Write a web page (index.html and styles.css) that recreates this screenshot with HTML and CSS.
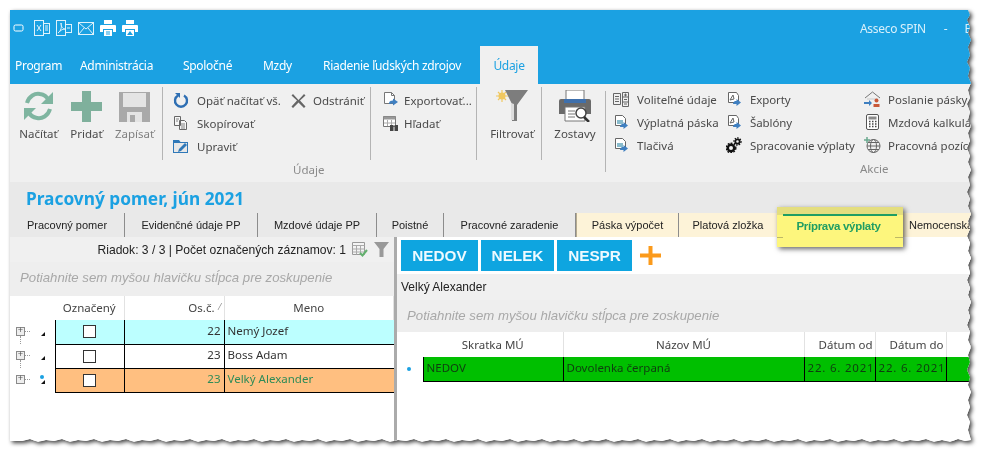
FILE: index.html
```html
<!DOCTYPE html>
<html lang="sk">

<head>
  <meta charset="UTF-8" />
  <title>Pracovný pomer</title>
  <link rel="stylesheet" href="styles.css">
</head>

<body>
  <div class="shot">
    <div class="window">

      <!-- Title bar -->
      <div class="titlebar">
        <div class="quick">
          <svg width="11" height="8" viewBox="0 0 11 8"><rect x="1" y="1" width="9" height="6" rx="1.5" fill="none" stroke="#fff"/><path d="M3 5.5h5" stroke="#1ba1e2"/></svg>
          <svg width="16" height="16" viewBox="0 0 16 16" fill="none" stroke="#dff2fb"><rect x=".5" y=".5" width="9" height="15"/><rect x="9.5" y="3.5" width="6" height="10"/><path d="M3 5l4 6M7 5l-4 6M11 6h3M11 8h3M11 10h3"/></svg>
          <svg width="16" height="16" viewBox="0 0 16 16" fill="none" stroke="#dff2fb"><rect x=".5" y=".5" width="9" height="15"/><rect x="9.5" y="4.5" width="6" height="8"/><path d="M2 13c3-2 4-6 3-10 0 4 2 6 4 6-3 0-5 2-7 4zM11 8h3"/></svg>
          <svg width="16" height="13" viewBox="0 0 16 13" fill="none" stroke="#dff2fb"><rect x=".5" y=".5" width="15" height="12"/><path d="M1 1l7 6 7-6M1 12l5-6M15 12l-5-6"/></svg>
          <svg width="16" height="16" viewBox="0 0 16 16"><path d="M4 0h8v4H4zM1 5h14a1 1 0 0 1 1 1v6h-3V9H3v3H0V6a1 1 0 0 1 1-1zM4 10h8v6H4z" fill="#fff"/><path d="M6 12h4M6 14h4" stroke="#1ba1e2"/></svg>
          <svg width="16" height="16" viewBox="0 0 16 16"><path d="M4 0h8v4H4zM1 5h14a1 1 0 0 1 1 1v6h-3V9H3v3H0V6a1 1 0 0 1 1-1zM4 10h8v6H4z" fill="#fff"/><path d="M8 11l3 4H5z" fill="#1ba1e2"/></svg>
        </div>
        <div class="user">
          <span>Asseco SPIN</span>
          <span class="user-dash">-</span>
          <span>B</span>
        </div>
      </div>

      <!-- Menu -->
      <nav class="menu">
        <a class="m-program">Program</a>
        <a class="m-admin">Administrácia</a>
        <a class="m-spol">Spoločné</a>
        <a class="m-mzdy">Mzdy</a>
        <a class="m-riad">Riadenie ľudských zdrojov</a>
        <a class="m-udaje">Údaje</a>
      </nav>

      <!-- Ribbon -->
      <div class="ribbon">
        <div class="group g-main">
          <div class="big b-nacitat">
            <svg width="31" height="32" viewBox="0 0 31 32" fill="none"><path d="M4 13C6 6 12 3 17 4c4 .6 7 3 8.500 6" stroke="#7fb5a0" stroke-width="4"/><path d="M30 2v12H18z" fill="#7fb5a0"/><path d="M27 19c-2 7-8 10-13 9-4-.6-7-3-8.500-6" stroke="#7fb5a0" stroke-width="4"/><path d="M1 30V18h12z" fill="#7fb5a0"/></svg>
            <span>Načítať</span>
          </div>
          <div class="big b-pridat">
            <svg width="31" height="32" viewBox="0 0 31 32"><path d="M11 1h9v11h11v9H20v11h-9V21H0v-9h11z" fill="#7fb09c"/></svg>
            <span>Pridať</span>
          </div>
          <div class="big b-zapisat">
            <svg width="31" height="32" viewBox="0 0 31 32"><path d="M0 2h31v30H0z" fill="#a9a9a9"/><path d="M4 3h23v14H4z" fill="#e4e4e4"/><path d="M8 22h15v10H8z" fill="#e4e4e4"/><path d="M11 25h5v7h-5z" fill="#a9a9a9"/></svg>
            <span class="muted">Zapísať</span>
          </div>
        </div>

        <div class="group g-udaje">
          <div class="cols">
            <div class="col c-a">
              <div class="item">
                <svg width="16" height="16" viewBox="0 0 16 16" fill="none"><path d="M5 3.500a6 6 0 1 0 6 0" stroke="#2f6fb3" stroke-width="2.400"/><path d="M2 1l5 0 0 5z" fill="#2f6fb3"/></svg>
                <span>Opäť načítať vš.</span>
              </div>
              <div class="item">
                <svg width="16" height="16" viewBox="0 0 16 16" fill="#f6f6f6" stroke="#666"><path d="M1.500 1.500h6v9h-6zM6.500 5.500h5l2 2v7h-7z"/><path d="M3 4h3M3 6h2M8 9h4M8 11h4M8 13h4" stroke-width=".8"/></svg>
                <span>Skopírovať</span>
              </div>
              <div class="item">
                <svg width="16" height="16" viewBox="0 0 16 16"><path d="M0 2h6l1.500 2H15v11H0z" fill="#2f78b8"/><path d="M1 5h13v9H1z" fill="#e8e8e8"/><path d="M5 14l1-3 6-6 2 2-6 6z" fill="#2f78b8"/></svg>
                <span>Upraviť</span>
              </div>
            </div>
            <div class="col c-b">
              <div class="item">
                <svg width="15" height="15" viewBox="0 0 15 15"><path d="M2 1l5.500 6L13 1l1.500 1.500L9 7.500l5.500 6L13 15 7.500 9.500 2 15 .5 13.500 6 7.500.5 2.500z" fill="#666"/></svg>
                <span>Odstrániť</span>
              </div>
            </div>
          </div>
          <div class="group-name n-udaje">Údaje</div>
        </div>

        <div class="group g-export">
          <div class="col">
            <div class="item">
              <svg width="16" height="16" viewBox="0 0 16 16"><path d="M1.500.5h7l3 3v8h-10z" fill="#fff" stroke="#777"/><path d="M8.500.5v3h3" fill="none" stroke="#777"/><path d="M6 12c0-3 2-3.500 4-3.500V6.500l5 3.500-5 3.500v-2c-2 0-3 .2-4 .5z" fill="#3f7fc0"/></svg>
              <span>Exportovať...</span>
            </div>
            <div class="item">
              <svg width="16" height="16" viewBox="0 0 16 16"><path d="M.5 1.500h12v10H.5z" fill="#fff" stroke="#777"/><path d="M.5 1.500h12v3H.5z" fill="#999"/><path d="M4.500 5v6M8.500 5v6M1 8h11" stroke="#aaa"/><rect x="7" y="10" width="3.500" height="6" fill="#444"/><rect x="11.500" y="10" width="3.500" height="6" fill="#444"/></svg>
              <span>Hľadať</span>
            </div>
          </div>
        </div>

        <div class="group g-filter">
          <div class="big">
            <svg width="32" height="32" viewBox="0 0 32 32"><path d="M9 0h23L21 15v16h-5V14z" fill="#7d7d7d"/><path d="M15 13v17h3V14z" fill="#ddd"/><circle cx="6" cy="6" r="3.500" fill="#f0c860"/><path d="M6 0v12M0 6h12M2 2l8 8M10 2l-8 8" stroke="#f0c860" stroke-width="1.200"/></svg>
            <span>Filtrovať</span>
          </div>
        </div>

        <div class="group g-reports">
          <div class="big">
            <svg width="32" height="32" viewBox="0 0 32 32"><path d="M7 0h18v10H7z" fill="#fff" stroke="#777"/><path d="M0 11a2 2 0 0 1 2-2h28a2 2 0 0 1 2 2v13H0z" fill="#6a6a6a"/><path d="M5 9h22v4H5z" fill="#3f70ac"/><path d="M6 17h20v14H6z" fill="#fff" stroke="#777"/><path d="M9 21h7M9 24h7M9 27h7" stroke="#777"/><circle cx="22" cy="23" r="5" fill="#fff" stroke="#444" stroke-width="1.500"/><path d="M25 27l5 5" stroke="#333" stroke-width="2.500"/></svg>
            <span>Zostavy</span>
          </div>
        </div>

        <div class="group g-akcie">
          <div class="cols">
            <div class="col c-d">
              <div class="item">
                <svg width="16" height="16" viewBox="0 0 16 16" fill="none" stroke="#666"><path d="M.5 2.500h7v11h-7zM9.500 1.500h6v14h-6zM2 5.500h4M2 8h4M2 10.500h4M9.500 6h6M9.500 11h6M11 4h3M12.500 2.500v3M11 8.500h3M11 13h3"/></svg>
                <span>Voliteľné údaje</span>
              </div>
              <div class="item">
                <svg width="16" height="16" viewBox="0 0 16 16"><path d="M2.500 1.500h7l3 3v7h-10z" fill="#fff" stroke="#666"/><path d="M4 6h6v4H4z" fill="#8bc"/><path d="M7 13c0-2.500 2-3 3.500-3V8l4.500 3.500L10.500 15v-2c-1.500 0-2.500.2-3.500 0z" fill="#3f7fc0"/></svg>
                <span>Výplatná páska</span>
              </div>
              <div class="item">
                <svg width="16" height="16" viewBox="0 0 16 16"><path d="M2.500 1.500h7l3 3v7h-10z" fill="#fff" stroke="#666"/><path d="M4 6h6v4H4z" fill="#8bc"/><path d="M7 13c0-2.500 2-3 3.500-3V8l4.500 3.500L10.500 15v-2c-1.500 0-2.500.2-3.500 0z" fill="#3f7fc0"/></svg>
                <span>Tlačivá</span>
              </div>
            </div>
            <div class="col c-e">
              <div class="item">
                <svg width="16" height="16" viewBox="0 0 16 16"><path d="M2.500 1.500h8l2 3v7h-10z" fill="#fff" stroke="#666"/><path d="M4 9l3-5 1 4z" fill="none" stroke="#666"/><path d="M7 13c0-2.500 2-3 3.500-3V8l4.500 3.500L10.500 15v-2c-1.500 0-2.500.2-3.500 0z" fill="#3f7fc0"/></svg>
                <span>Exporty</span>
              </div>
              <div class="item">
                <svg width="16" height="16" viewBox="0 0 16 16"><path d="M2.500 1.500h8l2 3v7h-10z" fill="#fff" stroke="#666"/><path d="M4 9l3-5 1 4z" fill="none" stroke="#666"/><path d="M7 13c0-2.500 2-3 3.500-3V8l4.500 3.500L10.500 15v-2c-1.500 0-2.500.2-3.500 0z" fill="#3f7fc0"/></svg>
                <span>Šablóny</span>
              </div>
              <div class="item">
                <svg width="16" height="16" viewBox="0 0 16 16"><circle cx="5" cy="11" r="3.200" fill="none" stroke="#111" stroke-width="2.400"/><circle cx="5" cy="11" r="4.800" fill="none" stroke="#111" stroke-width="1.400" stroke-dasharray="1.800 1.300"/><circle cx="11.500" cy="4.500" r="2.200" fill="none" stroke="#111" stroke-width="1.800"/><circle cx="11.500" cy="4.500" r="3.600" fill="none" stroke="#111" stroke-width="1.200" stroke-dasharray="1.500 1.200"/></svg>
                <span>Spracovanie výplaty</span>
              </div>
            </div>
            <div class="col c-f">
              <div class="item">
                <svg width="17" height="16" viewBox="0 0 17 16"><path d="M1 7l7.500-6L16 7" fill="none" stroke="#777"/><path d="M3 7h11v2H3z" fill="#ddd"/><path d="M0 11h5V9l3 3-3 3v-2H0z" fill="#3f7fc0"/><circle cx="12.500" cy="9.500" r="2" fill="#c9593a"/><path d="M9.500 16v-3h6v3z" fill="#c9593a"/></svg>
                <span>Poslanie pásky</span>
              </div>
              <div class="item">
                <svg width="17" height="16" viewBox="0 0 17 16"><rect x="2.500" y=".5" width="12" height="15" rx="1.500" fill="#fff" stroke="#555"/><path d="M4.500 2.500h8v3h-8z" fill="#8a8a8a"/><path d="M5 7.500h1.500M8 7.500h1.500M11 7.500h1.500M5 10h1.500M8 10h1.500M11 10h1.500M5 12.500h1.500M8 12.500h1.500M11 12.500h1.500" stroke="#444" stroke-width="1.500"/></svg>
                <span>Mzdová kalkulácia</span>
              </div>
              <div class="item">
                <svg width="17" height="16" viewBox="0 0 17 16" fill="none" stroke="#666"><circle cx="9.500" cy="9" r="6.500"/><ellipse cx="9.500" cy="9" rx="3" ry="6.500"/><path d="M3 9h13M4 5.500h11M4 12.500h11"/><path d="M3 0v6M0 3h6" stroke="#6aa88e" stroke-width="1.500"/></svg>
                <span>Pracovná pozícia</span>
              </div>
            </div>
          </div>
          <div class="group-name n-akcie">Akcie</div>
        </div>
      </div>

      <!-- Page heading and tabs -->
      <div class="page-head">
        <h1>Pracovný pomer, jún 2021</h1>
        <div class="tabs">
          <div class="tab w1">Pracovný pomer</div>
          <div class="tab w2">Evidenčné údaje PP</div>
          <div class="tab w3">Mzdové údaje PP</div>
          <div class="tab w4">Poistné</div>
          <div class="tab w5">Pracovné zaradenie</div>
          <div class="tab cream w6">Páska výpočet</div>
          <div class="tab cream w7">Platová zložka</div>
          <div class="tab-active">
            <div class="tab-active-line"></div>
            <div class="tab-active-text">Príprava výplaty</div>
          </div>
          <div class="tab cream w9">Nemocenská</div>
        </div>
      </div>

      <!-- Two panes -->
      <div class="panes">
        <section class="left">
          <div class="status">
            <span>Riadok: 3 / 3 | Počet označených záznamov: 1</span>
            <svg width="16" height="15" viewBox="0 0 16 15"><path d="M.5.5h12v12H.5z" fill="#f4f4f4" stroke="#999"/><path d="M.5 3.500h12M4.500 3.500v9M8.500 3.500v9M.5 7h12M.5 10h12" stroke="#aaa"/><path d="M8 11l2.500 2.500L15 8" fill="none" stroke="#63b06e" stroke-width="2"/></svg>
            <svg width="15" height="15" viewBox="0 0 15 15"><path d="M0 0h15L9.500 7v8h-4V7z" fill="#999"/></svg>
          </div>
          <div class="hint hint-left">Potiahnite sem myšou hlavičku stĺpca pre zoskupenie</div>
          <table class="grid grid-left">
            <thead>
              <tr>
                <th class="gut"></th>
                <th class="c-check">Označený</th>
                <th class="c-num">Os.č.<span class="sort">⁄</span></th>
                <th>Meno</th>
              </tr>
            </thead>
            <tbody>
              <tr class="r-cyan">
                <td class="gut"><span class="expander tree-down">+</span><span class="mark"></span></td>
                <td class="c-check"><span class="box"></span></td>
                <td class="c-num">22</td>
                <td>Nemý Jozef</td>
              </tr>
              <tr class="r-white">
                <td class="gut"><span class="expander tree-down">+</span><span class="mark"></span></td>
                <td class="c-check"><span class="box"></span></td>
                <td class="c-num">23</td>
                <td>Boss Adam</td>
              </tr>
              <tr class="r-orange">
                <td class="gut"><span class="expander">+</span><span class="mark"></span><span class="dot"></span></td>
                <td class="c-check"><span class="box"></span></td>
                <td class="c-num">23</td>
                <td>Velký Alexander</td>
              </tr>
            </tbody>
          </table>
        </section>

        <section class="right">
          <div class="buttons">
            <div class="btn b1">NEDOV</div>
            <div class="btn b2">NELEK</div>
            <div class="btn b3">NESPR</div>
            <svg class="plus" width="21" height="19" viewBox="0 0 21 19"><path d="M8.500 0h4v7.500H21v4h-8.500V19h-4v-7.500H0v-4h8.500z" fill="#fb9a1b"/></svg>
          </div>
          <div class="person">Velký Alexander</div>
          <div class="hint hint-right">Potiahnite sem myšou hlavičku stĺpca pre zoskupenie</div>
          <table class="grid grid-right">
            <thead>
              <tr>
                <th class="gut2"></th>
                <th class="c-code">Skratka MÚ</th>
                <th class="c-name">Názov MÚ</th>
                <th class="c-date">Dátum od</th>
                <th class="c-date">Dátum do</th>
                <th></th>
              </tr>
            </thead>
            <tbody>
              <tr class="r-green">
                <td class="gut2"><span class="dot2"></span></td>
                <td>NEDOV</td>
                <td>Dovolenka čerpaná</td>
                <td class="c-date">22. 6. 2021</td>
                <td class="c-date">22. 6. 2021</td>
                <td></td>
              </tr>
            </tbody>
          </table>
        </section>
      </div>

    </div>
  </div>
</body>

</html>
```

FILE: styles.css
```css
/* Page and torn screenshot edge */
body {
  margin: 0;
  background: #fff;
  font-family: "Noto Sans", sans-serif;
  font-size: 11.5px;
  color: #4a4a4a;
  overflow: hidden;
}

.shot {
  padding: 10px 0 0 10px;
  width: 978px;
  height: 451px;
  filter: drop-shadow(2px 2px 2px rgba(0, 0, 0, 0.75));
}

.window {
  width: 964px;
  height: 436px;
  background: #fff;
  overflow: hidden;
  clip-path: polygon(0 0, 958px 0, 960px 5px, 957px 10px, 960px 17px, 958px 23px, 961px 30px, 958px 37px, 960px 45px, 957px 52px, 960px 58px, 958px 66px, 961px 73px, 958px 80px, 960px 88px, 957px 94px, 960px 102px, 958px 110px, 961px 116px, 958px 123px, 960px 131px, 957px 138px, 960px 146px, 958px 152px, 961px 160px, 958px 167px, 960px 175px, 957px 182px, 960px 189px, 958px 196px, 961px 204px, 958px 211px, 960px 219px, 957px 226px, 960px 233px, 958px 241px, 961px 248px, 958px 255px, 960px 263px, 957px 270px, 960px 278px, 958px 285px, 961px 292px, 958px 300px, 960px 307px, 957px 315px, 960px 322px, 958px 330px, 961px 337px, 958px 345px, 960px 352px, 957px 360px, 960px 367px, 958px 375px, 961px 382px, 958px 390px, 960px 397px, 957px 405px, 960px 412px, 958px 420px, 961px 430px, 955px 431px, 948px 429px, 940px 432px, 932px 430px, 924px 432px, 916px 429px, 908px 431px, 900px 430px, 892px 432px, 884px 429px, 876px 431px, 868px 430px, 860px 432px, 852px 429px, 844px 431px, 836px 430px, 828px 432px, 820px 429px, 812px 431px, 804px 430px, 796px 432px, 788px 429px, 780px 431px, 772px 430px, 764px 432px, 756px 429px, 748px 431px, 740px 430px, 732px 432px, 724px 429px, 716px 431px, 708px 430px, 700px 432px, 692px 429px, 684px 431px, 676px 430px, 668px 432px, 660px 429px, 652px 431px, 644px 430px, 636px 432px, 628px 429px, 620px 431px, 612px 430px, 604px 432px, 596px 429px, 588px 431px, 580px 430px, 572px 432px, 564px 429px, 556px 431px, 548px 430px, 540px 432px, 532px 429px, 524px 431px, 516px 430px, 508px 432px, 500px 429px, 492px 431px, 484px 430px, 476px 432px, 468px 429px, 460px 431px, 452px 430px, 444px 432px, 436px 429px, 428px 431px, 420px 430px, 412px 432px, 404px 429px, 396px 431px, 388px 430px, 380px 432px, 372px 429px, 364px 431px, 356px 430px, 348px 432px, 340px 429px, 332px 431px, 324px 430px, 316px 432px, 308px 429px, 300px 431px, 292px 430px, 284px 432px, 276px 429px, 268px 431px, 260px 430px, 252px 432px, 244px 429px, 236px 431px, 228px 430px, 220px 432px, 212px 429px, 204px 431px, 196px 430px, 188px 432px, 180px 429px, 172px 431px, 164px 430px, 156px 432px, 148px 429px, 140px 431px, 132px 430px, 124px 432px, 116px 429px, 108px 431px, 100px 430px, 92px 432px, 84px 429px, 76px 431px, 68px 430px, 60px 432px, 52px 429px, 44px 431px, 36px 430px, 28px 432px, 20px 429px, 12px 431px, 0 431px);
}

/* Title bar */
.titlebar {
  height: 36px;
  background: #1ba1e2;
  display: flex;
  align-items: center;
  color: #d8f0fb;
  font-size: 12px;
  letter-spacing: -0.3px;
}

.quick {
  display: flex;
  align-items: center;
  gap: 6px;
  padding-left: 3px;
}

.quick svg:first-child {
  margin-right: 4px;
}

.user {
  margin-left: auto;
  display: flex;
  width: 114px;
  white-space: nowrap;
}

.user-dash {
  margin: 0 17px 0 18px;
}

/* Menu */
.menu {
  height: 38px;
  background: #1ba1e2;
  display: flex;
  color: #fff;
  font-size: 12px;
  letter-spacing: -0.3px;
}

.menu a {
  line-height: 40px;
  white-space: nowrap;
}

.m-program { margin-left: 5px; width: 65px; }
.m-admin { width: 103px; }
.m-spol { width: 80px; }
.m-mzdy { width: 60px; }
.m-riad { width: 157px; }

.m-udaje {
  width: 58px;
  text-align: center;
  background: #f0f0f0;
  color: #1ba1e2;
}

/* Ribbon */
.ribbon {
  height: 98px;
  background: #f0f0f0;
  display: flex;
}

.group {
  box-sizing: border-box;
  padding-top: 3px;
  height: 73px;
  margin-top: 3px;
  border-right: 1px solid #b4b4b4;
  flex: none;
}

.g-main { width: 153px; display: flex; }
.g-udaje { width: 208px; }
.g-export { width: 106px; padding-left: 12px; }
.g-filter { width: 65px; }
.g-reports { width: 63px; border-right: 0; }

.g-akcie {
  flex: 1;
  height: 81px;
  margin-top: 7px;
  padding: 0 0 0 7px;
  border-right: 0;
  border-left: 1px solid #b4b4b4;
}

.big {
  display: flex;
  flex-direction: column;
  align-items: center;
  gap: 4px;
  white-space: nowrap;
}

.big svg {
  display: block;
}

.big span {
  line-height: 16px;
}

.b-nacitat { margin-left: 13px; width: 31px; }
.b-pridat { margin-left: 17px; width: 31px; }
.b-zapisat { margin-left: 17px; width: 31px; }
.g-filter .big { margin-left: 3px; width: 64px; }
.g-reports .big { margin-left: 1px; width: 64px; }

.muted {
  color: #808080;
}

.cols {
  display: flex;
}

.col {
  display: flex;
  flex-direction: column;
  gap: 7px;
  padding-top: 2px;
}

.item {
  display: flex;
  align-items: center;
  gap: 8px;
  height: 16px;
  white-space: nowrap;
}

.item svg {
  flex: none;
}

.g-export .item { gap: 5px; }

.c-a { width: 113px; padding-left: 10px; }
.c-b { padding-left: 5px; }
.c-b .item { gap: 7px; }
.c-d { width: 113px; }
.c-e { width: 138px; }
.c-f .item { gap: 7px; }
.c-e span { letter-spacing: -0.1px; }

.g-akcie .col {
  padding-top: 0;
}

.group-name {
  color: #8a8a8a;
  line-height: 16px;
}

.n-udaje {
  margin: 8px 0 0 130px;
}

.n-akcie {
  margin: 8px 0 0 247px;
}

/* Heading and tabs */
.page-head {
  background: #e9e9e9;
  height: 55px;
  display: flex;
  flex-direction: column;
}

h1 {
  margin: 0;
  height: 31px;
  padding-left: 16px;
  font-size: 17.3px;
  line-height: 34px;
  color: #1ba1e2;
  font-weight: 700;
}

.tabs {
  display: flex;
  height: 24px;
  font-family: "Liberation Sans", sans-serif;
  font-size: 11px;
  color: #222;
}

.tab {
  box-sizing: border-box;
  flex: none;
  line-height: 24px;
  text-align: center;
  border-right: 1px solid #8c8c8c;
  white-space: nowrap;
}

.cream {
  background: #fdf3d8;
}

.w1 { width: 115px; }
.w2 { width: 133px; }
.w3 { width: 119px; }
.w4 { width: 67px; }
.w5 { width: 132px; }
.w6 { width: 103px; border-left: 1px solid #b5ab90; }
.w7 { width: 98px; border-right: 0; }
.w9 { flex: 1; border-right: 0; text-align: left; padding-left: 6px; }

.tab-active {
  position: relative;
  z-index: 2;
  flex: none;
  box-sizing: border-box;
  width: 126px;
  height: 40px;
  margin-top: -6px;
  padding: 7px 6px 0;
  background:
    linear-gradient(#bdb866, #bdb866) no-repeat 0 30px / 6px 1px,
    linear-gradient(#bdb866, #bdb866) no-repeat 100% 30px / 8px 1px,
    linear-gradient(#e4de7e 0, #e4de7e 8px, #fdf67d 8px);
  box-shadow: 2px 2px 5px rgba(0, 0, 0, 0.6);
}

.tab-active-line {
  height: 2px;
  background: #1f9e63;
}

.tab-active-text {
  padding-right: 3px;
  text-align: center;
  line-height: 21px;
  color: #1f9e63;
  font-size: 11.5px;
  font-weight: 700;
  letter-spacing: -0.3px;
}

/* Panes */
.panes {
  display: flex;
  height: 204px;
  font-family: "Liberation Sans", sans-serif;
  font-size: 12px;
}

.left {
  width: 384px;
  border-right: 3px solid #ababab;
  flex: none;
  background: #fff;
}

.right {
  flex: 1;
  background: #fff;
}

.status {
  box-sizing: border-box;
  height: 25px;
  display: flex;
  align-items: center;
  justify-content: flex-end;
  padding-right: 5px;
  gap: 6px;
  background: #f0f0f0;
  color: #222;
}

.status span {
  font-size: 12.1px;
}

.hint {
  background: #eee;
  color: #a8a8a8;
  font-style: italic;
  font-size: 13.200px;
  white-space: nowrap;
}

.hint-left {
  height: 34px;
  line-height: 32px;
  padding-left: 10px;
}

.hint-right {
  height: 32px;
  line-height: 31px;
  padding-left: 10px;
}

/* Grids */
.grid {
  border-collapse: collapse;
  table-layout: fixed;
  font-family: "Noto Sans", sans-serif;
  font-size: 11.5px;
}

.grid th,
.grid td {
  box-sizing: border-box;
}

.grid th {
  font-weight: 400;
  color: #444;
  height: 24px;
  padding: 0 2px 1px;
  border-right: 1px solid #e2e2e2;
  white-space: nowrap;
}

.grid td {
  height: 24px;
  padding: 0 3px 3px;
  border: 1px solid #000;
  color: #333;
  white-space: nowrap;
}

.grid tbody tr:first-child td {
  border-top: 0;
}

.grid td:last-child {
  border-right: 0;
}

.grid-left { width: 384px; }
.gut { width: 45px; }
.c-check { width: 69px; text-align: center; }
.c-num { width: 100px; }

.grid-left th.c-num {
  text-align: right;
  padding-right: 9px;
  position: relative;
}

.grid-left td.c-num {
  text-align: right;
}

.grid td.c-check {
  padding: 0;
}

.grid th.gut,
.grid th.gut2 {
  border-right: 0;
}

.grid td.gut,
.grid td.gut2 {
  border-top: 0;
  border-bottom: 0;
  border-left: 0;
  background: #fff;
  padding: 0;
  position: relative;
}

.sort {
  position: absolute;
  right: 3px;
  top: 4px;
  color: #888;
  font-size: 9px;
}

/* Tree expander with dotted lines */
.expander {
  position: absolute;
  left: 6px;
  top: 7px;
  box-sizing: border-box;
  width: 9px;
  height: 9px;
  border: 1px solid #8a8a8a;
  background: #eee;
  color: #555;
  font: 9px/7px "Liberation Mono", monospace;
  text-align: center;
}

.expander::after {
  content: "";
  position: absolute;
  left: 8px;
  top: 3px;
  width: 5px;
  border-top: 1px dotted #999;
}

.tree-down::before {
  content: "";
  position: absolute;
  left: 3px;
  top: 8px;
  height: 16px;
  border-left: 1px dotted #999;
}

.mark {
  position: absolute;
  left: 31px;
  top: 12px;
  width: 0;
  height: 0;
  border-left: 4px solid transparent;
  border-bottom: 4px solid #111;
}

.dot {
  position: absolute;
  left: 30px;
  top: 7px;
  width: 4px;
  height: 4px;
  border-radius: 50%;
  background: #1ba1e2;
}

.box {
  display: block;
  box-sizing: border-box;
  width: 13px;
  height: 13px;
  margin: 0 auto;
  border: 1px solid #333;
  background: #fff;
}

.r-cyan td { background: #bcffff; }
.r-white td { background: #fff; }

.r-orange td {
  background: #ffbf80;
  color: #2e8b57;
  border-top: 1px dotted #000;
}

/* Right pane */
.buttons {
  height: 37px;
  display: flex;
  align-items: center;
  gap: 3px;
  padding-left: 4px;
  background: #fff;
}

.btn {
  box-sizing: border-box;
  height: 31px;
  line-height: 31px;
  text-align: center;
  background: #0ea5e0;
  color: #eefaff;
  font-size: 15.3px;
  font-weight: 700;
}

.b1 { width: 77px; }
.b2 { width: 73px; }
.b3 { width: 75px; }

.plus {
  margin-left: 5px;
}

.person {
  height: 26px;
  line-height: 27px;
  padding-left: 4px;
  background: #f0f0f0;
  color: #222;
}

.grid-right {
  width: 574px;
}

.gut2 { width: 26px; }
.c-code { width: 140px; }
.c-name { width: 241px; }
.c-date { width: 71px; text-align: right; }

.grid-right th {
  height: 25px;
}

.r-green td {
  background: #00bf00;
  color: #0f3d0f;
}

.r-green td.c-date {
  padding-right: 2px;
  letter-spacing: 0.8px;
}

.dot2 {
  position: absolute;
  left: 10px;
  top: 10px;
  width: 4px;
  height: 4px;
  border-radius: 50%;
  background: #1ba1e2;
}
```
